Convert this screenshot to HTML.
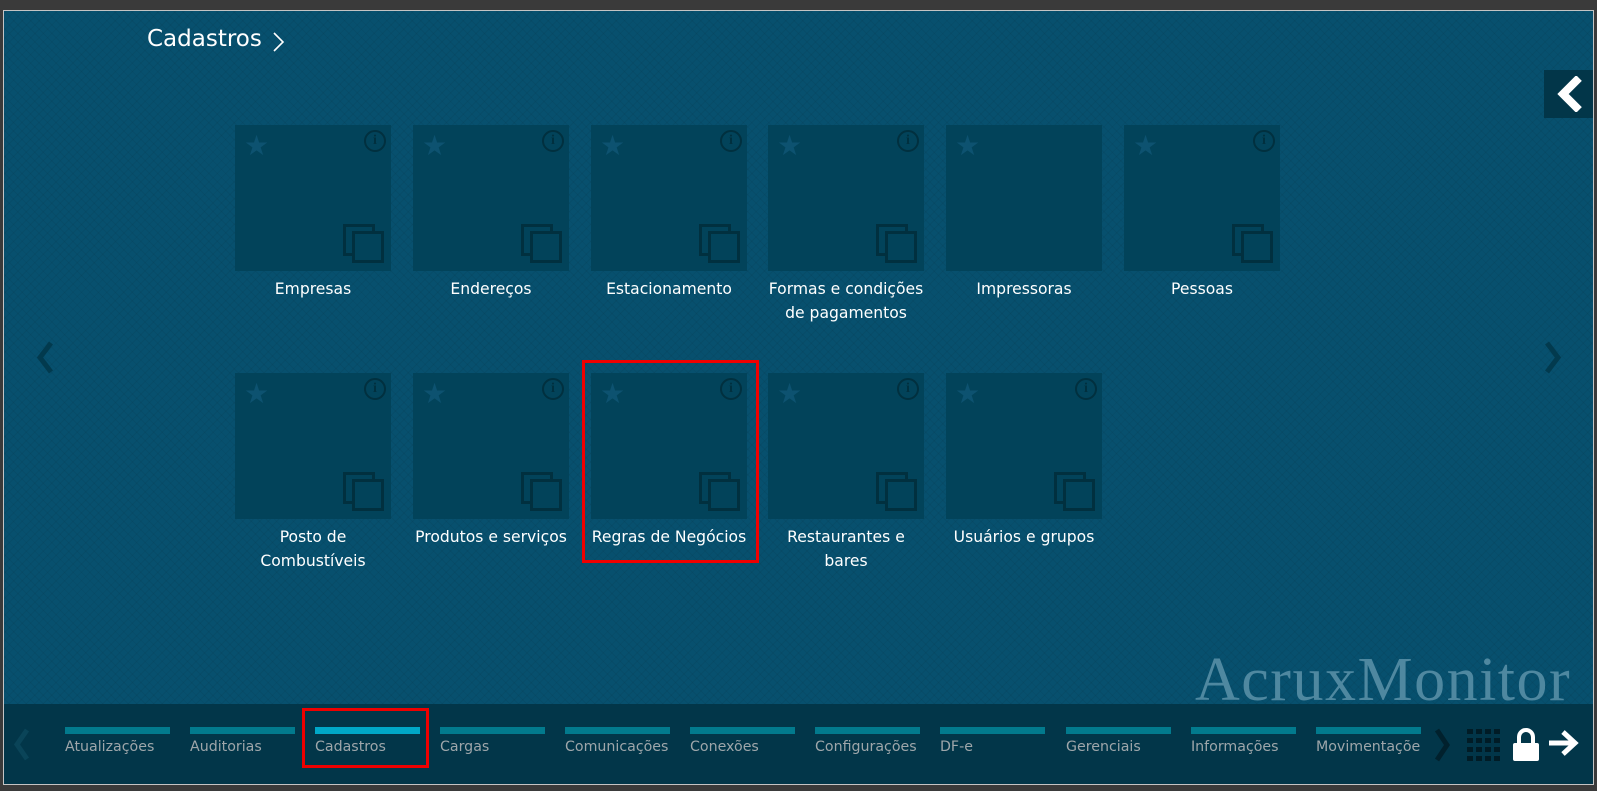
<!DOCTYPE html>
<html><head><meta charset="utf-8"><style>
*{margin:0;padding:0;box-sizing:border-box}
body{width:1597px;height:791px;background:#3a3a3a;position:relative;overflow:hidden;font-family:"DejaVu Sans","Liberation Sans",sans-serif}
#frame{position:absolute;left:3px;top:10px;width:1591px;height:775px;border:1px solid #c4c4c4;background:#07506e;
background-image:repeating-linear-gradient(45deg,rgba(0,0,0,.05) 0 1px,transparent 1px 6px),repeating-linear-gradient(-45deg,rgba(0,0,0,.05) 0 1px,transparent 1px 6px)}
.abs{position:absolute}
.tile{position:absolute;width:156px;height:146px;background:#02435a}
.lbl{position:absolute;width:180px;text-align:center;color:#fff;font-size:15.6px;line-height:24px}
.star{position:absolute;left:9px;top:7px;color:#0d5270;font-size:28px;line-height:28px}
.info{position:absolute;left:129px;top:5px;width:22px;height:22px;border:2px solid #01303f;border-radius:50%;color:#01303f;font-size:14px;font-weight:bold;text-align:center;line-height:18px;font-family:"Liberation Serif",serif}
.cp1,.cp2{position:absolute;width:32px;height:32px;border:3px solid #01303f}
.cp1{left:108px;top:99px}
.cp2{left:117px;top:106px;background:#02435a}
.it{position:absolute;top:727px;width:105px}
.it i{display:block;height:7px;background:#027a8d}
.it span{display:block;color:#9ea6aa;font-size:14.2px;margin-top:5px;white-space:nowrap;overflow:hidden}
.red{position:absolute;border:3px solid #e00}
</style></head><body>
<div id="frame"></div>
<div class="abs" style="left:147px;top:24px;color:#fff;font-size:23px;line-height:30px">Cadastros</div>
<svg class="abs" style="left:272px;top:31px" width="14" height="22"><path d="M2 2 L11 11 L2 20" stroke="#fff" stroke-width="1.6" fill="none"/></svg>

<div class="abs" style="left:1544px;top:70px;width:49px;height:48px;background:#023649"></div>
<svg class="abs" style="left:1555px;top:76px" width="30" height="36"><path d="M24 2 L8 18 L24 34" stroke="#fff" stroke-width="8" fill="none"/></svg>
<svg class="abs" style="left:35px;top:341px" width="20" height="33"><path d="M16 2 L5 16.5 L16 31" stroke="#023a4e" stroke-width="5" fill="none"/></svg>
<svg class="abs" style="left:1543px;top:341px" width="20" height="33"><path d="M4 2 L15 16.5 L4 31" stroke="#023a4e" stroke-width="5" fill="none"/></svg>

<div class="tile" style="left:235px;top:125px"><div class="star">★</div><div class="info">i</div><div class="cp1"></div><div class="cp2"></div></div>
<div class="tile" style="left:413px;top:125px"><div class="star">★</div><div class="info">i</div><div class="cp1"></div><div class="cp2"></div></div>
<div class="tile" style="left:591px;top:125px"><div class="star">★</div><div class="info">i</div><div class="cp1"></div><div class="cp2"></div></div>
<div class="tile" style="left:768px;top:125px"><div class="star">★</div><div class="info">i</div><div class="cp1"></div><div class="cp2"></div></div>
<div class="tile" style="left:946px;top:125px"><div class="star">★</div></div>
<div class="tile" style="left:1124px;top:125px"><div class="star">★</div><div class="info">i</div><div class="cp1"></div><div class="cp2"></div></div>

<div class="lbl" style="left:223px;top:277px">Empresas</div>
<div class="lbl" style="left:401px;top:277px">Endereços</div>
<div class="lbl" style="left:579px;top:277px">Estacionamento</div>
<div class="lbl" style="left:756px;top:277px">Formas e condições<br>de pagamentos</div>
<div class="lbl" style="left:934px;top:277px">Impressoras</div>
<div class="lbl" style="left:1112px;top:277px">Pessoas</div>

<div class="tile" style="left:235px;top:373px"><div class="star">★</div><div class="info">i</div><div class="cp1"></div><div class="cp2"></div></div>
<div class="tile" style="left:413px;top:373px"><div class="star">★</div><div class="info">i</div><div class="cp1"></div><div class="cp2"></div></div>
<div class="tile" style="left:591px;top:373px"><div class="star">★</div><div class="info">i</div><div class="cp1"></div><div class="cp2"></div></div>
<div class="tile" style="left:768px;top:373px"><div class="star">★</div><div class="info">i</div><div class="cp1"></div><div class="cp2"></div></div>
<div class="tile" style="left:946px;top:373px"><div class="star">★</div><div class="info">i</div><div class="cp1"></div><div class="cp2"></div></div>

<div class="lbl" style="left:223px;top:525px">Posto de<br>Combustíveis</div>
<div class="lbl" style="left:401px;top:525px">Produtos e serviços</div>
<div class="lbl" style="left:579px;top:525px">Regras de Negócios</div>
<div class="lbl" style="left:756px;top:525px">Restaurantes e<br>bares</div>
<div class="lbl" style="left:934px;top:525px">Usuários e grupos</div>

<div class="red" style="left:582px;top:360px;width:177px;height:203px"></div>

<div class="abs" style="left:1195px;top:647px;color:#4f88a0;font-size:62px;font-family:'Liberation Serif',serif;line-height:66px;letter-spacing:1.5px;white-space:nowrap">AcruxMonitor</div>

<div class="abs" style="left:4px;top:704px;width:1589px;height:80px;background:#023649"></div>
<svg class="abs" style="left:13px;top:728px" width="18" height="33"><path d="M14 2 L4 16.5 L14 31" stroke="#0a4458" stroke-width="5" fill="none"/></svg>
<div class="it" style="left:65px"><i></i><span>Atualizações</span></div>
<div class="it" style="left:190px"><i></i><span>Auditorias</span></div>
<div class="it" style="left:315px"><i style="background:#00a8c8"></i><span>Cadastros</span></div>
<div class="it" style="left:440px"><i></i><span>Cargas</span></div>
<div class="it" style="left:565px"><i></i><span>Comunicações</span></div>
<div class="it" style="left:690px"><i></i><span>Conexões</span></div>
<div class="it" style="left:815px"><i></i><span>Configurações</span></div>
<div class="it" style="left:940px"><i></i><span>DF-e</span></div>
<div class="it" style="left:1066px"><i></i><span>Gerenciais</span></div>
<div class="it" style="left:1191px"><i></i><span>Informações</span></div>
<div class="it" style="left:1316px"><i></i><span>Movimentações</span></div>
<svg class="abs" style="left:1433px;top:728px" width="18" height="34"><path d="M4 2 L14 17 L4 32" stroke="#01212d" stroke-width="5" fill="none"/></svg>
<svg class="abs" style="left:1467px;top:729px" width="33" height="32"><g fill="#011c26">
<rect x="0" y="0" width="6" height="5"/><rect x="9" y="0" width="6" height="5"/><rect x="18" y="0" width="6" height="5"/><rect x="27" y="0" width="6" height="5"/>
<rect x="0" y="9" width="6" height="5"/><rect x="9" y="9" width="6" height="5"/><rect x="18" y="9" width="6" height="5"/><rect x="27" y="9" width="6" height="5"/>
<rect x="0" y="18" width="6" height="5"/><rect x="9" y="18" width="6" height="5"/><rect x="18" y="18" width="6" height="5"/><rect x="27" y="18" width="6" height="5"/>
<rect x="0" y="27" width="6" height="5"/><rect x="9" y="27" width="6" height="5"/><rect x="18" y="27" width="6" height="5"/><rect x="27" y="27" width="6" height="5"/></g></svg>
<svg class="abs" style="left:1512px;top:727px" width="28" height="34"><path d="M7 17 V10 A7 7 0 0 1 21 10 V17" stroke="#fff" stroke-width="4" fill="none"/><rect x="1" y="16" width="26" height="18" rx="2" fill="#fff"/></svg>
<svg class="abs" style="left:1547px;top:729px" width="34" height="28"><path d="M2 14 H26 M16 3 L28 14 L16 25" stroke="#fff" stroke-width="5" fill="none"/></svg>
<div class="red" style="left:302px;top:708px;width:127px;height:60px"></div>
</body></html>
